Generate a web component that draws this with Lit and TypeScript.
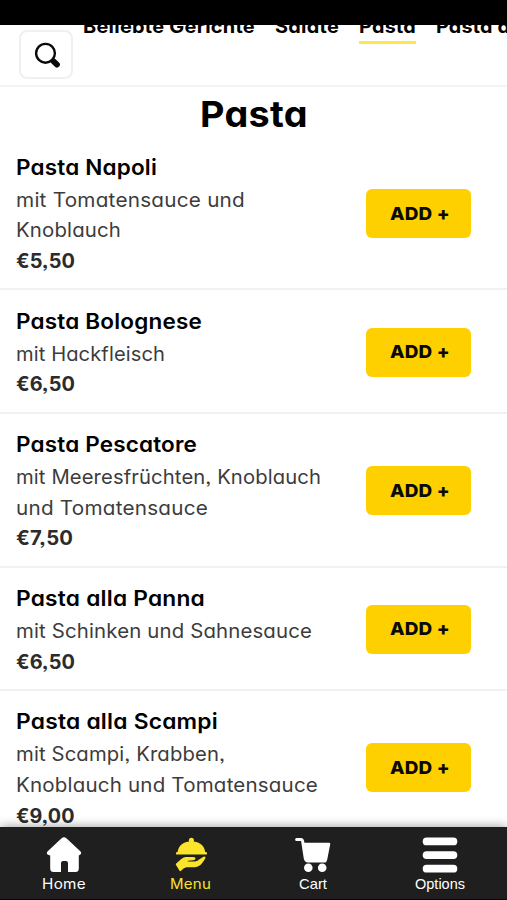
import { LitElement, html, css, svg } from "lit";
import { customElement, property } from "lit/decorators.js";

/** A single line of text, widened and tracked so that it spans `width` pixels. */
@customElement("fit-line")
class FitLine extends LitElement {
  @property() text = "";
  @property({ type: Number }) width = 0;

  static styles = css`
    :host { display: block; white-space: pre; font-feature-settings: "cv11", "ss03"; font-optical-sizing: none; }
    .run { display: inline-block; transform-origin: 0 50%; }
    .box { display: block; }
  `;

  updated() {
    if (!this.width) return;
    const run = this.renderRoot.querySelector(".run") as HTMLElement;
    const box = this.renderRoot.querySelector(".box") as HTMLElement;
    run.style.letterSpacing = "0px";
    run.style.transform = "none";
    const natural = run.getBoundingClientRect().width;
    const stretch = 1 + (this.width / natural - 1) * 0.75;
    run.style.letterSpacing = `${(this.width / stretch - natural) / this.text.length}px`;
    run.style.transform = `scaleX(${stretch})`;
    box.style.width = `${this.width}px`;
  }

  render() {
    return html`<span class="box"><span class="run">${this.text}</span></span>`;
  }
}

type Line = [string, number];
interface Dish { name: Line; lines: Line[]; price: Line; }

const dishes: Dish[] = [
  { name: ["Pasta Napoli", 141], lines: [["mit Tomatensauce und", 229], ["Knoblauch", 105]], price: ["€5,50", 59] },
  { name: ["Pasta Bolognese", 186], lines: [["mit Hackfleisch", 149]], price: ["€6,50", 59] },
  { name: ["Pasta Pescatore", 181], lines: [["mit Meeresfrüchten, Knoblauch", 305], ["und Tomatensauce", 192]], price: ["€7,50", 57] },
  { name: ["Pasta alla Panna", 189], lines: [["mit Schinken und Sahnesauce", 296]], price: ["€6,50", 59] },
  { name: ["Pasta alla Scampi", 202], lines: [["mit Scampi, Krabben,", 209], ["Knoblauch und Tomatensauce", 302]], price: ["€9,00", 58.5] },
];

const tabs: { label: string; width: number; active?: boolean }[] = [
  { label: "Beliebte Gerichte", width: 172 },
  { label: "Salate", width: 64 },
  { label: "Pasta", width: 57, active: true },
  { label: "Pasta al forno", width: 138 },
];

const icons = {
  home: svg`<path d="M15.6 1.3Q18 -.7 20.4 1.3L34.3 14.2Q36.2 16.2 34 17.7L32.8 18.5V31.5Q32.8 35 29.4 35H22V26Q22 24 20 24H17Q15 24 15 26V35H7.600Q4.200 35 4.200 31.500V18.500L2 17.700Q-.2 16.200 1.700 14.200Z"/>`,
  menu: svg`<circle cx="18.400" cy="3.200" r="2.500"/><path d="M4.600 15.200C5.600 .6 31.200 .6 32.200 15.200Z"/><rect x="3" y="15" width="31" height="2.600" rx="1.200"/><path d="M3.200 26.500L8 22.200Q10 20 12.500 19.900H20.500Q22.500 20.100 22.500 21.600Q22.300 23.200 20.500 23.300L15 23.700Q14.200 24.200 15 24.600H21.500Q24 24.400 26.500 22.300L30 20Q32.200 18.900 32.500 20.500Q32.300 22 28.800 26.500Q26.300 29.900 22 30.200H13.500Q11 30.300 8 33.700Q7.200 34.600 6.400 33.600L3 28Q2.500 27.100 3.200 26.500Z"/>`,
  cart: svg`<path d="M1.600 2.600H6.300Q7.300 2.600 7.600 4L10.300 21.500Q10.800 24 13 24H30" fill="none" stroke="currentColor" stroke-width="3" stroke-linecap="round" stroke-linejoin="round"/><path d="M7.800 5.800H34.200Q35.500 5.800 35.200 7.200L32.400 21.800Q32 24.800 29.800 24.800H13Q10.500 24.800 10.200 22Z"/><circle cx="13.300" cy="30.700" r="4.300"/><circle cx="27.200" cy="30.700" r="4.300"/>`,
  options: svg`<rect x=".7" y=".5" width="34.600" height="7.800" rx="3.900"/><rect x=".7" y="14.200" width="34.600" height="7.800" rx="3.900"/><rect x=".7" y="27.800" width="34.600" height="7.800" rx="3.900"/>`,
};

@customElement("app-root")
class AppRoot extends LitElement {
  static styles = css`
    :host {
      display: flex; flex-direction: column; height: 900px; overflow: hidden;
      background: #fff; color: #000; font-family: Inter, "Open Sans", sans-serif;
    }
    .status { height: 25px; background: #000; flex: none; }
    .top {
      height: 59.500px; flex: none; display: flex; overflow: hidden;
      border-bottom: 2px solid #f3f3f3; align-items: flex-start;
    }
    .search {
      flex: none; box-sizing: border-box; width: 54px; height: 49px; margin: 5px 10px 0 19px; padding: 0;
      border: 2px solid #f0f0f0; border-radius: 8px; background: #fff;
      display: grid; place-items: center;
    }
    .search svg { width: 28px; height: 28px; margin: 0 0 0 2px; }
    .tabs { display: flex; gap: 20px; margin-top: -14.500px; flex: none; }
    .tab { font-size: 18.500px; font-weight: 700; line-height: 30px; border-bottom: 3px solid transparent; }
    .tab.active { border-color: #fbe84a; }
    h1 {
      margin: 0; height: 50px; flex: none; display: flex; justify-content: center;
      font-size: 36px; font-weight: 700; line-height: 54px;
    }
    .dish {
      flex: none; display: flex; justify-content: space-between; align-items: center;
      padding: 13.700px 36px 11.400px 15.500px; border-bottom: 2px solid #f1f1f1;
    }
    .name { font-size: 21.500px; font-weight: 600; line-height: 34.500px; }
    .desc { font-size: 19.500px; line-height: 30.800px; color: #3c3c3c; }
    .price { font-size: 19.500px; font-weight: 700; line-height: 30.800px; color: #2c2c2c; }
    .add {
      flex: none; width: 105px; height: 49px; border: 0; padding: 0; border-radius: 6px; background: #ffd000;
      display: grid; place-items: center; color: #0a0a0a;
      font: 800 18px/1 Inter, sans-serif;
    }
    .list { flex: 1; min-height: 0; overflow: hidden; display: flex; flex-direction: column; }
    .bar {
      flex: none; height: 73px; box-sizing: border-box; background: #1f1f1f; color: #fff;
      border-bottom: 1px solid #0c0508; box-shadow: 0 0 10px rgba(0, 0, 0, .42); z-index: 1;
      display: grid; grid-template-columns: 128px 125px 119px 135px;
    }
    .item { display: flex; flex-direction: column; align-items: center; padding-top: 10px; font-size: 14px; color: #fff; }
    .item.active { color: #fbe42c; }
    .item svg { width: 36px; height: 36px; fill: currentColor; overflow: visible; }
    .item fit-line { line-height: 20px; margin-top: 1px; }
    .plain { font-family: "Liberation Sans", Arial, sans-serif; font-size: 14.500px; }
  `;

  private item(icon: unknown, label: string, width: number, cls = "") {
    return html`<div class="item ${cls}">
      <svg viewBox="0 0 36 36">${icon}</svg>
      <fit-line .text=${label} .width=${width}></fit-line>
    </div>`;
  }

  render() {
    return html`
      <div class="status"></div>
      <header class="top">
        <button class="search" aria-label="Suche">
          <svg viewBox="0 0 28 28" fill="none" stroke="#0a0a0a">
            <circle cx="12.500" cy="12.300" r="9.400" stroke-width="2.400" />
            <path d="M18.800 18.800L20.500 20.500" stroke-width="3.200" />
            <path d="M20.600 20.400L24 23.600" stroke-width="5.800" stroke-linecap="round" />
          </svg>
        </button>
        <nav class="tabs">
          ${tabs.map((t) => html`<fit-line class="tab ${t.active ? "active" : ""}" .text=${t.label} .width=${t.width}></fit-line>`)}
        </nav>
      </header>
      <main class="list">
        <h1><fit-line .text=${"Pasta"} .width=${108}></fit-line></h1>
        ${dishes.map((d) => html`<section class="dish">
          <div>
            <fit-line class="name" .text=${d.name[0]} .width=${d.name[1]}></fit-line>
            ${d.lines.map((l) => html`<fit-line class="desc" .text=${l[0]} .width=${l[1]}></fit-line>`)}
            <fit-line class="price" .text=${d.price[0]} .width=${d.price[1]}></fit-line>
          </div>
          <button class="add"><fit-line .text=${"ADD +"} .width=${60}></fit-line></button>
        </section>`)}
      </main>
      <nav class="bar">
        ${this.item(icons.home, "Home", 44)}
        ${this.item(icons.menu, "Menu", 41, "active")}
        ${this.item(icons.cart, "Cart", 28, "plain")}
        ${this.item(icons.options, "Options", 50, "plain")}
      </nav>
    `;
  }
}
